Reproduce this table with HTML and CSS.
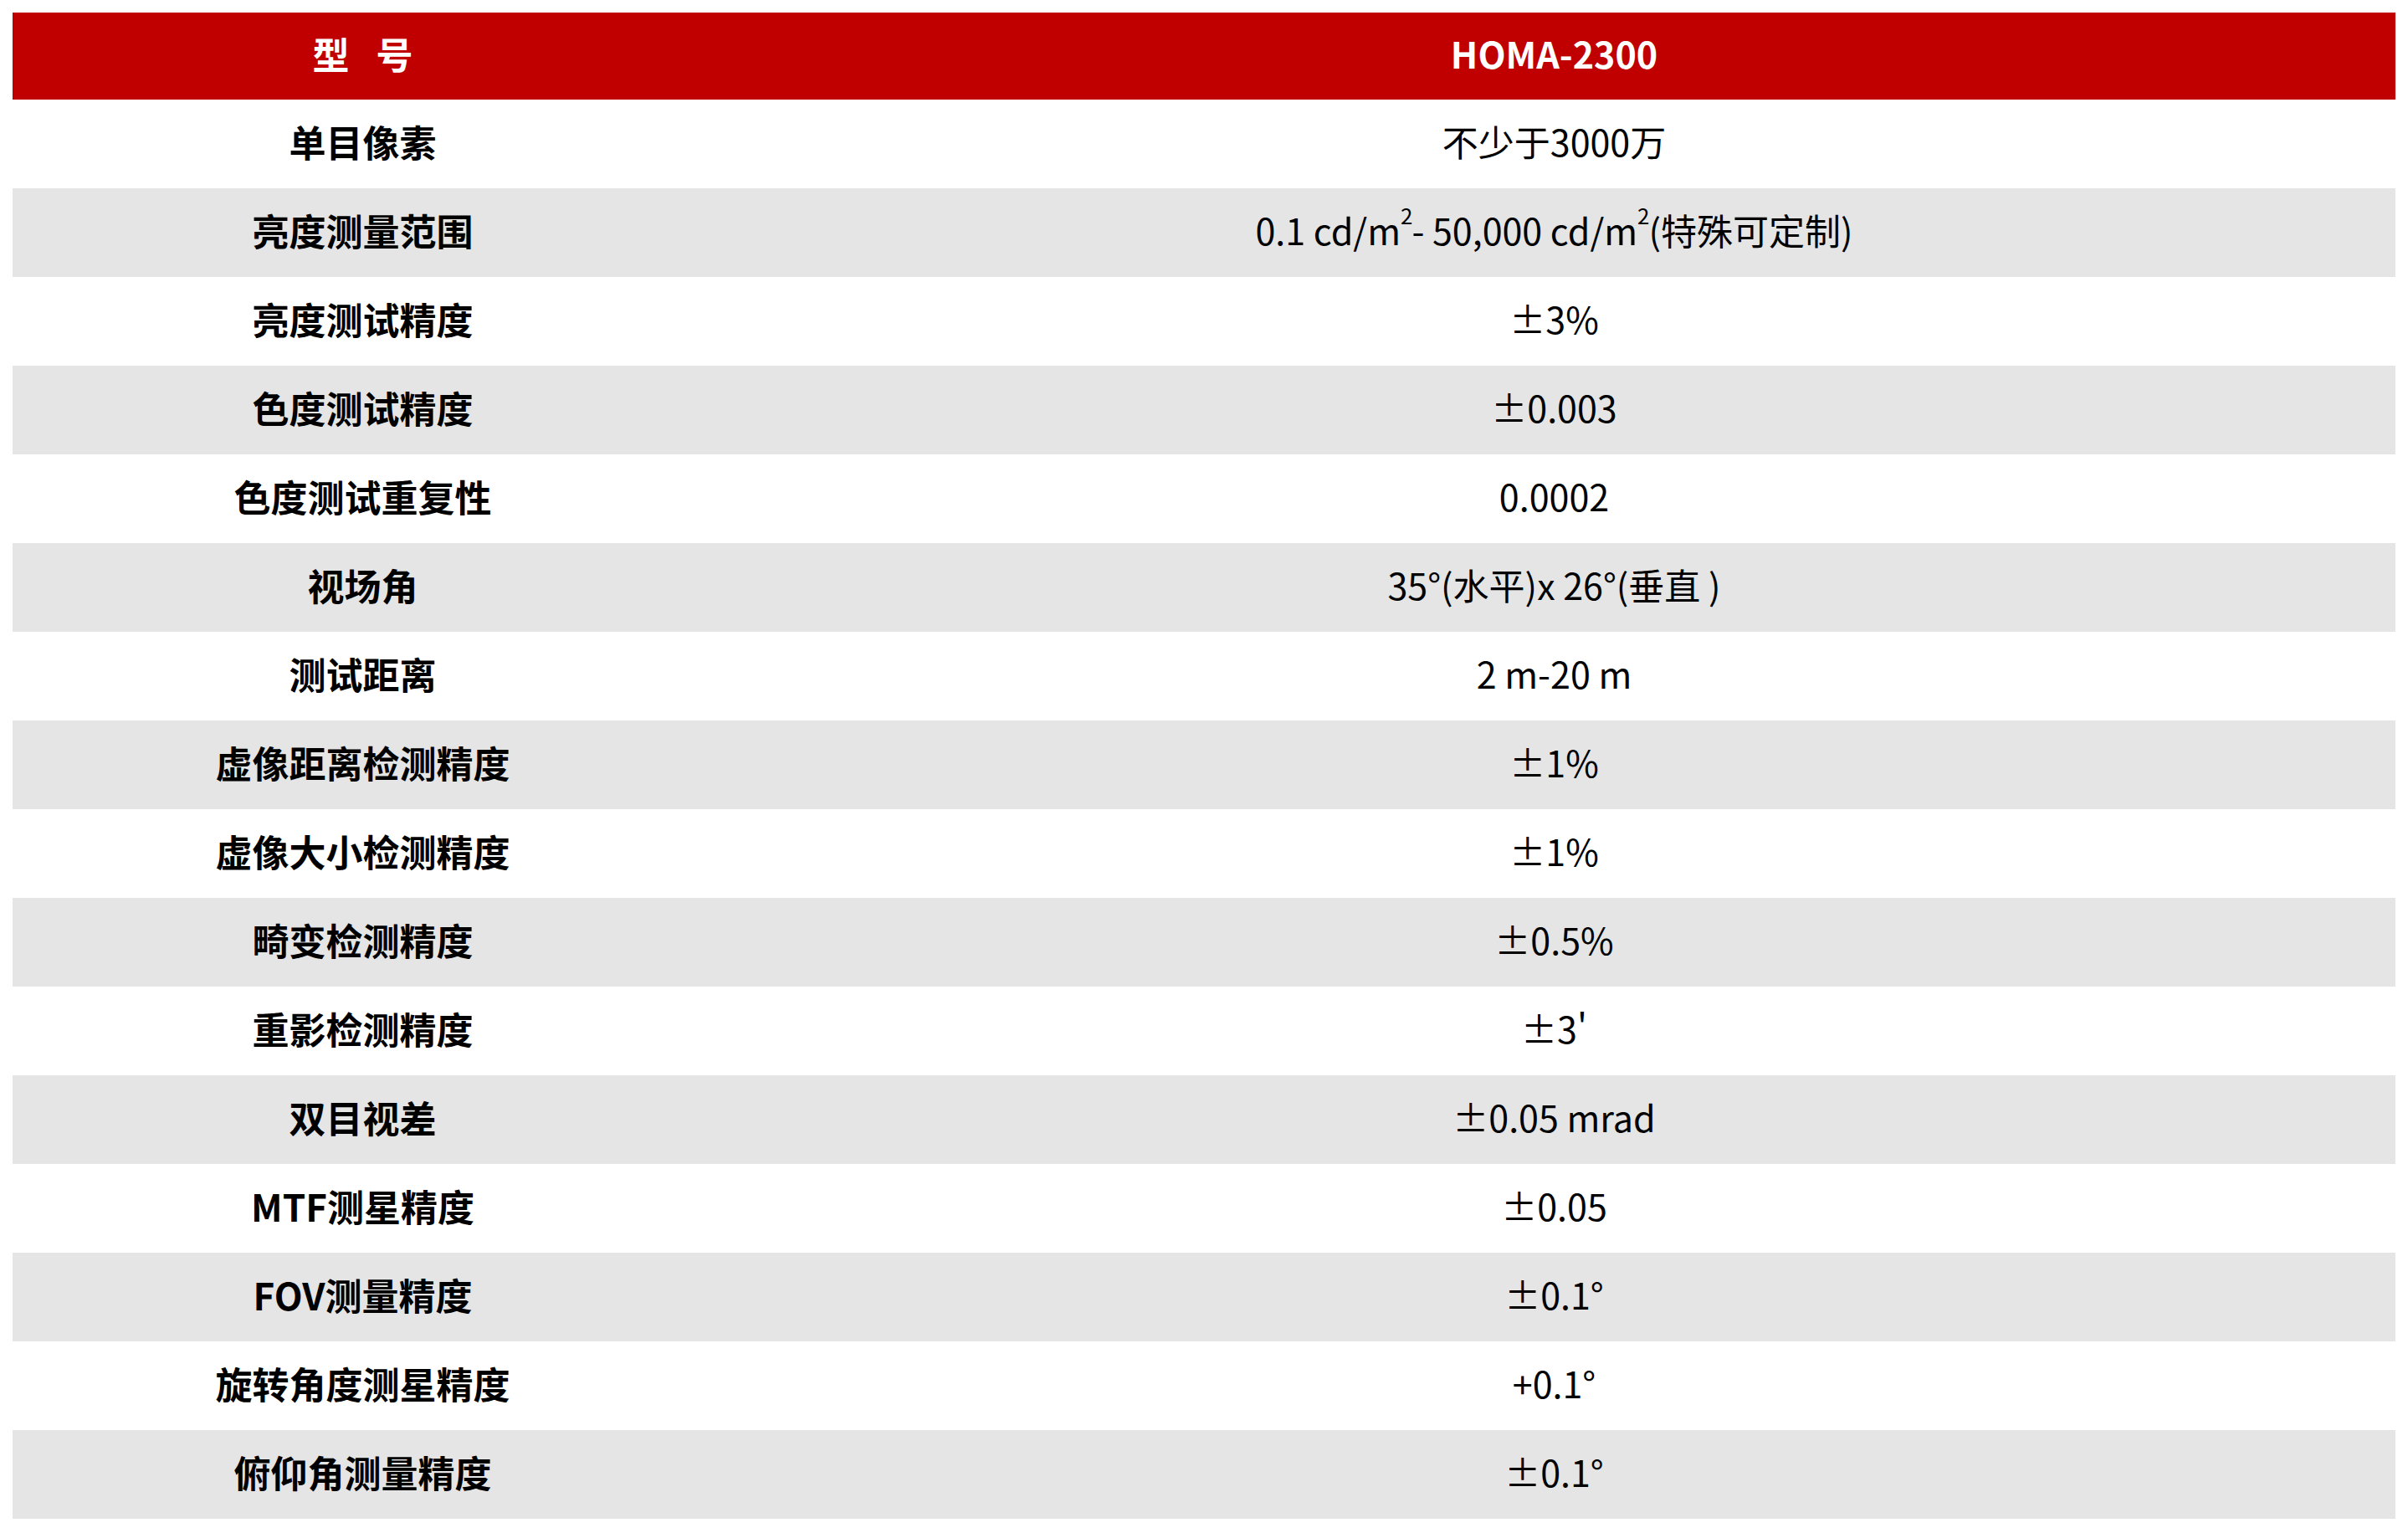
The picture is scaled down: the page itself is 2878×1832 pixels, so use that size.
FILE: index.html
```html
<!DOCTYPE html>
<html lang="zh-CN">
<head>
<meta charset="utf-8">
<title>HOMA-2300</title>
<link rel="stylesheet" href="styles.css">
</head>
<body>
<table class="spec">
  <thead>
    <tr class="head"><th class="label">型 号</th><th class="value">HOMA-2300</th></tr>
  </thead>
  <tbody>
    <tr><td class="label">单目像素</td><td class="value">不少于3000万</td></tr>
    <tr><td class="label">亮度测量范围</td><td class="value">0.1 cd/m<sup>2</sup>- 50,000 cd/m<sup>2</sup>(特殊可定制)</td></tr>
    <tr><td class="label">亮度测试精度</td><td class="value">±3%</td></tr>
    <tr><td class="label">色度测试精度</td><td class="value">±0.003</td></tr>
    <tr><td class="label">色度测试重复性</td><td class="value">0.0002</td></tr>
    <tr><td class="label">视场角</td><td class="value">35°(水平)x 26°(垂直 )</td></tr>
    <tr><td class="label">测试距离</td><td class="value">2 m-20 m</td></tr>
    <tr><td class="label">虚像距离检测精度</td><td class="value">±1%</td></tr>
    <tr><td class="label">虚像大小检测精度</td><td class="value">±1%</td></tr>
    <tr><td class="label">畸变检测精度</td><td class="value">±0.5%</td></tr>
    <tr><td class="label">重影检测精度</td><td class="value">±3'</td></tr>
    <tr><td class="label">双目视差</td><td class="value">±0.05 mrad</td></tr>
    <tr><td class="label">MTF测星精度</td><td class="value">±0.05</td></tr>
    <tr><td class="label">FOV测量精度</td><td class="value">±0.1°</td></tr>
    <tr><td class="label">旋转角度测星精度</td><td class="value">+0.1°</td></tr>
    <tr><td class="label">俯仰角测量精度</td><td class="value">±0.1°</td></tr>
  </tbody>
</table>
</body>
</html>
```
FILE: styles.css
```css
html, body {
  margin: 0;
  padding: 0;
  background: #ffffff;
}
body {
  padding: 15px;
  font-family: "Noto Sans CJK SC", "Noto Sans", sans-serif;
  color: #000000;
}
.spec {
  width: 2848px;
  border-collapse: collapse;
  table-layout: fixed;
}
.spec th, .spec td {
  padding: 0 0 7px 0;
  text-align: center;
  vertical-align: middle;
  font-size: 43px;
  line-height: 1;
}
.spec .label {
  width: 837px;
  font-weight: 700;
  font-size: 44px;
}
.spec td.value {
  font-weight: 400;
}
.spec .head {
  background: #c00000;
  color: #ffffff;
  height: 104px;
}
.spec .head th {
  font-weight: 700;
  word-spacing: 22px;
}
.spec tbody tr {
  height: 106px;
}
.spec tbody tr:nth-child(even) {
  background: #e5e5e5;
}
.spec sup {
  font-size: 0.6em;
  line-height: 0;
  vertical-align: 25px;
  letter-spacing: -1px;
}
```
